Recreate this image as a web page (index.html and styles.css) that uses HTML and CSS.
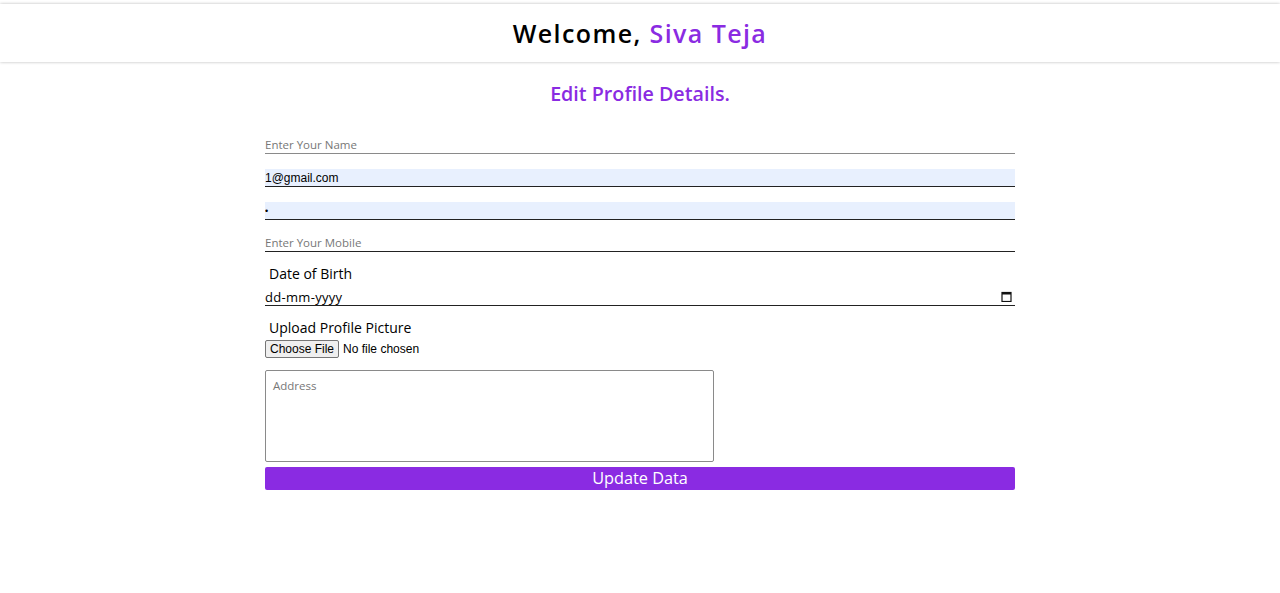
FILE: index.html
```html
<!DOCTYPE html>
<html lang="en">
<head>
<meta charset="utf-8">
<title>Edit Profile</title>
<link rel="stylesheet" href="styles.css">
</head>
<body>
<header class="topbar">
  <h1 class="welcome">Welcome, <span class="accent">Siva Teja</span></h1>
</header>
<main class="page">
  <h2 class="title">Edit Profile Details.</h2>
  <form class="form">
    <input class="field field-light" type="text" placeholder="Enter Your Name">
    <input class="field field-filled" type="text" value="1@gmail.com">
    <input class="field field-filled field-pass" type="text" value="•">
    <input class="field field-mobile" type="text" placeholder="Enter Your Mobile">
    <label class="label label-dob">Date of Birth</label>
    <div class="field field-date">
      <span class="date-text">dd-mm-yyyy</span>
      <svg class="cal" width="11" height="11" viewBox="0 0 11 11" aria-hidden="true">
        <rect x="1" y="1.5" width="9" height="9" fill="none" stroke="#111" stroke-width="1.2"/>
        <rect x="1" y="1" width="9" height="2.5" fill="#111"/>
      </svg>
    </div>
    <label class="label label-upload">Upload Profile Picture</label>
    <div class="file-row">
      <span class="file-btn">Choose File</span>
      <span class="file-text">No file chosen</span>
    </div>
    <textarea class="address" placeholder="Address"></textarea>
    <button class="submit" type="button">Update Data</button>
  </form>
</main>
</body>
</html>
```

FILE: styles.css
```css
* { box-sizing: border-box; }

body {
  margin: 0;
  background: #fff;
  font-family: "Open Sans", "Noto Sans", sans-serif;
  color: #000;
}

.topbar {
  margin-top: 4px;
  height: 58px;
  background: #fff;
  box-shadow: 0 0 3px rgba(0, 0, 0, 0.28);
  display: flex;
  align-items: center;
  justify-content: center;
}

.welcome {
  margin: 0;
  font-size: 25px;
  font-weight: 600;
  letter-spacing: 1.4px;
  line-height: 1;
}

.accent { color: #8a2be2; }

.page {
  display: flex;
  flex-direction: column;
  align-items: center;
}

.title {
  margin: 20px 0 0;
  font-size: 19.7px;
  font-weight: 600;
  color: #8a2be2;
  line-height: 24px;
}

.form {
  width: 750px;
  display: flex;
  flex-direction: column;
  align-items: flex-start;
  margin-top: 30px;
}

.field {
  width: 100%;
  height: 18px;
  margin: 0 0 15px;
  padding: 0;
  border: none;
  border-bottom: 1px solid #222;
  background: transparent;
  font-family: "Open Sans", sans-serif;
  font-size: 11.5px;
  color: #000;
  outline: none;
}

.field::placeholder { color: #777; }

.field-light { border-bottom-color: #8a8a8a; }

.field-filled {
  background: #e8f0fe;
  font-family: "Liberation Sans", Arial, sans-serif;
  font-size: 12px;
}

.field-pass {
  font-size: 9px;
  margin-bottom: 14px;
}

.field-mobile { margin-bottom: 13px; }

.label {
  font-size: 14px;
  padding-left: 4px;
  line-height: 18px;
}

.label-dob { margin-bottom: 5px; }

.field-date {
  display: flex;
  align-items: center;
  justify-content: space-between;
  padding-right: 3px;
  margin-bottom: 13px;
}

.date-text {
  font-size: 13px;
  letter-spacing: 0.3px;
}

.cal { display: block; }

.label-upload { margin-bottom: 3px; }

.file-row {
  display: flex;
  align-items: center;
  gap: 4px;
  font-family: "Liberation Sans", Arial, sans-serif;
  font-size: 12px;
}

.file-btn {
  display: inline-block;
  height: 18px;
  line-height: 16px;
  padding: 0 4px;
  background: #efefef;
  border: 1px solid #767676;
  border-radius: 2px;
  color: #000;
}

.address {
  display: block;
  width: 449px;
  height: 92px;
  margin-top: 12px;
  padding: 7px 7px;
  border: 1px solid #8a8a8a;
  border-radius: 2px;
  font-family: "Open Sans", sans-serif;
  font-size: 11.5px;
  resize: none;
  outline: none;
}

.address::placeholder { color: #777; }

.submit {
  width: 100%;
  height: 23px;
  margin-top: 5px;
  padding: 0;
  border: none;
  border-radius: 2px;
  background: #8a2be2;
  color: #fff;
  font-family: "Open Sans", sans-serif;
  font-size: 16.3px;
  line-height: 23px;
  cursor: pointer;
}
```
